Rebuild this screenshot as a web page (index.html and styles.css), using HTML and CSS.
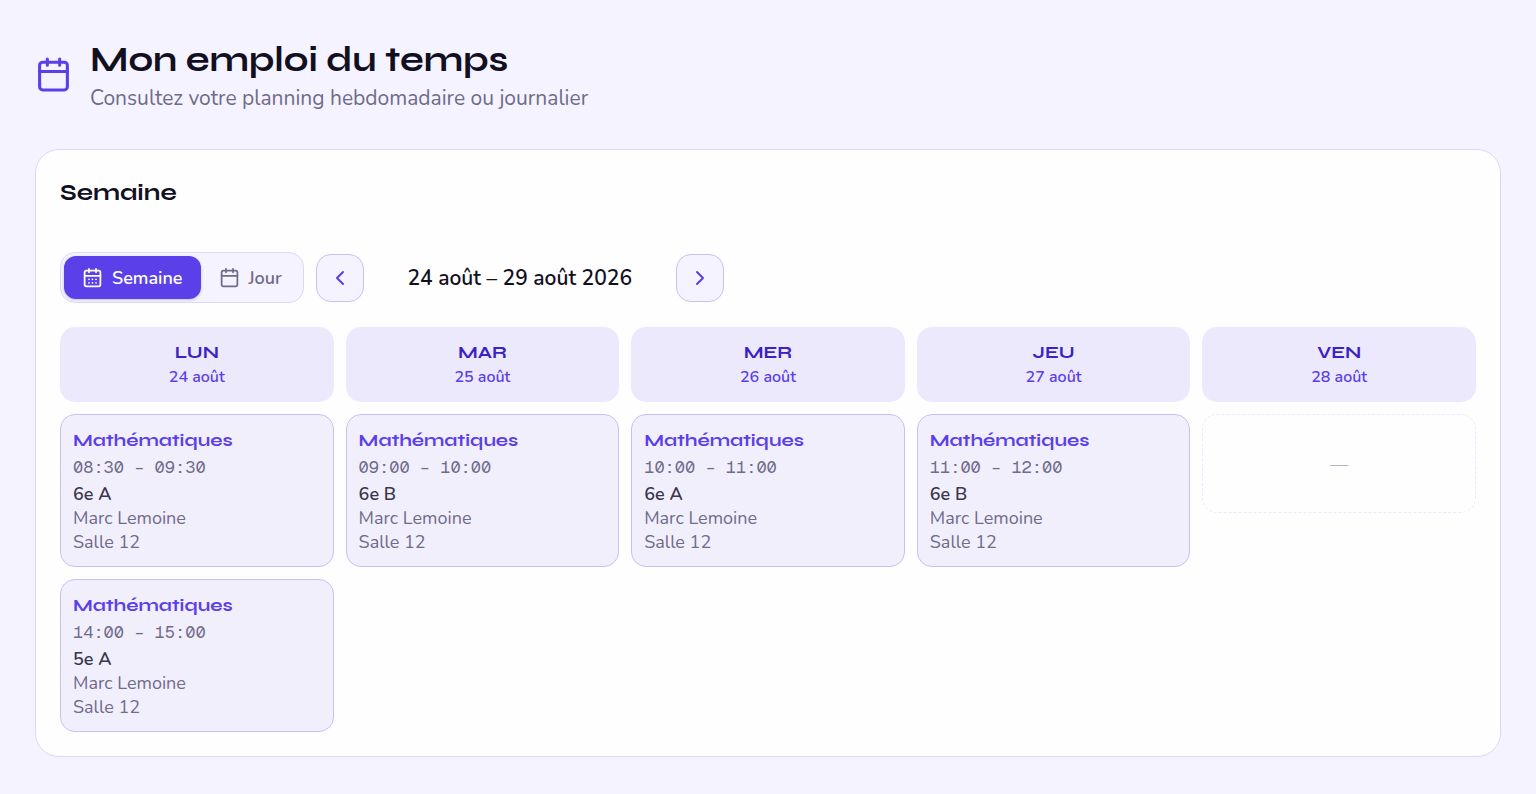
FILE: index.html
```html
<!DOCTYPE html>
<html lang="fr">

<head>
    <meta charset="UTF-8">
    <meta name="viewport" content="width=device-width, initial-scale=1.0">
    <title>Mon emploi du temps</title>
    <link rel="stylesheet" href="styles.css">
</head>

<body>
    <main class="page">
        <header class="page-header">
            <svg class="page-icon" viewBox="0 0 24 24">
                <rect x="3" y="4" width="18" height="18" rx="2" />
                <path d="M8 2v4M16 2v4M3 10h18" />
            </svg>
            <div>
                <h1>Mon emploi du temps</h1>
                <p class="subtitle">Consultez votre planning hebdomadaire ou journalier</p>
            </div>
        </header>

        <section class="card">
            <h2>Semaine</h2>

            <div class="toolbar">
                <div class="toggle">
                    <button type="button" class="toggle-btn active">
                        <svg class="icon" viewBox="0 0 24 24">
                            <rect x="3" y="4" width="18" height="18" rx="2" />
                            <path d="M8 2v4M16 2v4M3 10h18M8 14h.01M12 14h.01M16 14h.01M8 18h.01M12 18h.01M16 18h.01" />
                        </svg>
                        Semaine
                    </button>
                    <button type="button" class="toggle-btn">
                        <svg class="icon" viewBox="0 0 24 24">
                            <rect x="3" y="4" width="18" height="18" rx="2" />
                            <path d="M8 2v4M16 2v4M3 10h18" />
                        </svg>
                        Jour
                    </button>
                </div>
                <button type="button" class="nav-btn" aria-label="Semaine précédente">
                    <svg class="chevron" viewBox="0 0 24 24"><path d="M15 18l-6-6 6-6" /></svg>
                </button>
                <span class="period">24 août – 29 août 2026</span>
                <button type="button" class="nav-btn" aria-label="Semaine suivante">
                    <svg class="chevron" viewBox="0 0 24 24"><path d="M9 18l6-6-6-6" /></svg>
                </button>
            </div>

            <div class="week">
                <div class="day">
                    <div class="day-head">
                        <h3>LUN</h3>
                        <p>24 août</p>
                    </div>
                    <div class="lesson">
                        <h4>Mathématiques</h4>
                        <p class="time">08:30 – 09:30</p>
                        <p class="group">6e A</p>
                        <p>Marc Lemoine</p>
                        <p>Salle 12</p>
                    </div>
                    <div class="lesson">
                        <h4>Mathématiques</h4>
                        <p class="time">14:00 – 15:00</p>
                        <p class="group">5e A</p>
                        <p>Marc Lemoine</p>
                        <p>Salle 12</p>
                    </div>
                </div>
                <div class="day">
                    <div class="day-head">
                        <h3>MAR</h3>
                        <p>25 août</p>
                    </div>
                    <div class="lesson">
                        <h4>Mathématiques</h4>
                        <p class="time">09:00 – 10:00</p>
                        <p class="group">6e B</p>
                        <p>Marc Lemoine</p>
                        <p>Salle 12</p>
                    </div>
                </div>
                <div class="day">
                    <div class="day-head">
                        <h3>MER</h3>
                        <p>26 août</p>
                    </div>
                    <div class="lesson">
                        <h4>Mathématiques</h4>
                        <p class="time">10:00 – 11:00</p>
                        <p class="group">6e A</p>
                        <p>Marc Lemoine</p>
                        <p>Salle 12</p>
                    </div>
                </div>
                <div class="day">
                    <div class="day-head">
                        <h3>JEU</h3>
                        <p>27 août</p>
                    </div>
                    <div class="lesson">
                        <h4>Mathématiques</h4>
                        <p class="time">11:00 – 12:00</p>
                        <p class="group">6e B</p>
                        <p>Marc Lemoine</p>
                        <p>Salle 12</p>
                    </div>
                </div>
                <div class="day">
                    <div class="day-head">
                        <h3>VEN</h3>
                        <p>28 août</p>
                    </div>
                    <div class="empty">—</div>
                </div>
            </div>
        </section>
    </main>
</body>

</html>
```
FILE: styles.css
```css
* {
    margin: 0;
    padding: 0;
    box-sizing: border-box;
}

body {
    background: #f5f3ff;
    color: #12101f;
    font-family: Nunito, 'Noto Sans', sans-serif;
    font-size: 18px;
    line-height: 24px;
}

h1,
h2,
h3,
h4 {
    font-family: Syne, 'DejaVu Sans', sans-serif;
    font-weight: 700;
}

svg {
    fill: none;
    stroke: currentColor;
    stroke-width: 2;
    stroke-linecap: round;
    stroke-linejoin: round;
    flex-shrink: 0;
}

.page {
    padding: 36px 35px;
}

.page-header {
    display: flex;
    align-items: center;
    gap: 18px;
    margin-bottom: 36px;
}

.page-icon {
    width: 37px;
    height: 37px;
    color: #5b3fe8;
}

h1 {
    font-size: 35px;
    line-height: 48px;
}

.subtitle {
    color: #6f6b8a;
    font-size: 21px;
    line-height: 29px;
}

.card {
    padding: 24px;
    background: #fefefe;
    border: 1px solid #ddd8fb;
    border-radius: 24px;
}

h2 {
    font-size: 24px;
    line-height: 38px;
    margin-bottom: 40px;
}

.toolbar {
    display: flex;
    align-items: center;
    gap: 12px;
    margin-bottom: 24px;
}

.toggle {
    display: flex;
    padding: 3px;
    background: #f5f3ff;
    border: 1px solid #ddd8fb;
    border-radius: 15px;
}

.toggle-btn {
    display: flex;
    align-items: center;
    gap: 9px;
    height: 43px;
    padding: 0 18px;
    color: #6f6b8a;
    background: none;
    border: none;
    border-radius: 12px;
    font-family: inherit;
    font-size: 18px;
    font-weight: 600;
    cursor: pointer;
}

.toggle-btn.active {
    color: #fff;
    background: #5b3fe8;
    box-shadow: 0 1px 3px rgba(18, 16, 31, 0.2);
}

.icon {
    width: 21px;
    height: 21px;
}

.nav-btn {
    display: flex;
    align-items: center;
    justify-content: center;
    width: 48px;
    height: 48px;
    color: #5b3fe8;
    background: #f5f3ff;
    border: 1px solid #c8bff8;
    border-radius: 15px;
    cursor: pointer;
}

.chevron {
    width: 24px;
    height: 24px;
}

.period {
    min-width: 288px;
    text-align: center;
    font-size: 21px;
    font-weight: 600;
}

.week {
    display: grid;
    grid-template-columns: repeat(5, 1fr);
    gap: 12px;
}

.day {
    display: flex;
    flex-direction: column;
    gap: 12px;
}

.day-head {
    padding: 12px;
    text-align: center;
    color: #5b3fe8;
    background: #ede9fd;
    border-radius: 15px;
}

.day-head h3 {
    color: #3b22c4;
    font-size: 18px;
    line-height: 26px;
}

.day-head p {
    font-size: 16px;
    line-height: 25px;
    font-weight: 600;
}

.lesson {
    padding: 12px;
    color: #6f6b8a;
    background: #f2effd;
    border: 1px solid #c8bff8;
    border-radius: 15px;
}

.lesson h4 {
    color: #5b3fe8;
    font-size: 18px;
    line-height: 26px;
}

.lesson .time {
    font-family: 'Geist Mono', Cousine, 'Liberation Mono', monospace;
    font-size: 17px;
    line-height: 29px;
}

.lesson .group {
    color: #3a364d;
    font-weight: 600;
}

.empty {
    display: flex;
    align-items: center;
    justify-content: center;
    height: 99px;
    color: #b5b2c4;
    border: 1px dashed #ede9fd;
    border-radius: 15px;
}
```
